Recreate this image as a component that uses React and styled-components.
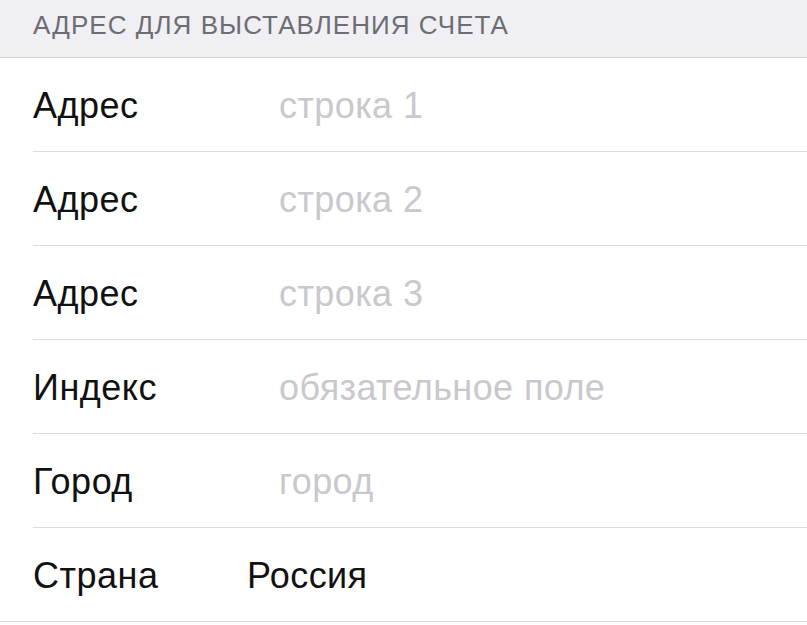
import React from "react";
import styled, { createGlobalStyle } from "styled-components";

const GlobalStyle = createGlobalStyle`
  body {
    margin: 0;
    background: #ffffff;
    font-family: "Liberation Sans", Arial, sans-serif;
  }
`;

const Page = styled.div`
  width: 807px;
  height: 625px;
  overflow: hidden;
  background: #ffffff;
`;

const SectionHeader = styled.div`
  height: 58px;
  box-sizing: border-box;
  padding: 0 0 6px 33px;
  display: flex;
  align-items: center;
  background: #efeff4;
  border-bottom: 1px solid #d3d3d7;
  color: #6d6d72;
  font-size: 26px;
  letter-spacing: 1.05px;
  text-transform: uppercase;
`;

const List = styled.div`
  display: flex;
  flex-direction: column;
`;

const Row = styled.div`
  height: 94px;
  box-sizing: border-box;
  margin-left: ${(props) => (props.$last ? "0" : "33px")};
  padding-left: ${(props) => (props.$last ? "33px" : "0")};
  padding-top: 2px;
  display: flex;
  align-items: center;
  border-bottom: 1px solid #dcdce0;
`;

const Label = styled.span`
  width: ${(props) => props.$width || "246px"};
  flex-shrink: 0;
  color: #111111;
  font-size: 36px;
  letter-spacing: 0.5px;
`;

const Value = styled.span`
  color: ${(props) => (props.$placeholder ? "#c8c8cd" : "#111111")};
  font-size: 36px;
  letter-spacing: 0.4px;
`;

const rows = [
  { label: "Адрес", value: "строка 1", placeholder: true },
  { label: "Адрес", value: "строка 2", placeholder: true },
  { label: "Адрес", value: "строка 3", placeholder: true },
  { label: "Индекс", value: "обязательное поле", placeholder: true },
  { label: "Город", value: "город", placeholder: true },
];

export default function App() {
  return (
    <Page>
      <GlobalStyle />
      <SectionHeader>Адрес для выставления счета</SectionHeader>
      <List>
        {rows.map((r, i) => (
          <Row key={i}>
            <Label>{r.label}</Label>
            <Value $placeholder={r.placeholder}>{r.value}</Value>
          </Row>
        ))}
        <Row $last>
          <Label $width="214px">Страна</Label>
          <Value>Россия</Value>
        </Row>
      </List>
    </Page>
  );
}
